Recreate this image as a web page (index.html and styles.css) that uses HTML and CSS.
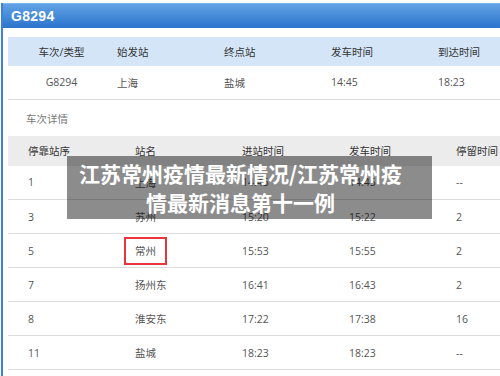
FILE: index.html
```html
<!DOCTYPE html>
<html>
<head>
<meta charset="utf-8">
<link rel="stylesheet" href="styles.css">
</head>
<body>
<div class="page">
  <div class="titlebar">G8294</div>
  <div class="content">
    <table class="tbl summary">
      <tr class="head"><th class="c1">车次/类型</th><th>始发站</th><th>终点站</th><th>发车时间</th><th>到达时间</th></tr>
      <tr><td class="c1">G8294</td><td>上海</td><td>盐城</td><td>14:45</td><td>18:23</td></tr>
    </table>
    <div class="section">车次详情</div>
    <table class="tbl stops">
      <tr class="head"><th>停靠站序</th><th>站名</th><th>进站时间</th><th>发车时间</th><th>停留时间</th></tr>
      <tr><td>1</td><td>上海</td><td>14:45</td><td>14:45</td><td>--</td></tr>
      <tr><td>3</td><td>苏州</td><td>15:20</td><td>15:22</td><td>2</td></tr>
      <tr><td>5</td><td><span class="mark">常州</span></td><td>15:53</td><td>15:55</td><td>2</td></tr>
      <tr><td>7</td><td>扬州东</td><td>16:41</td><td>16:43</td><td>2</td></tr>
      <tr><td>8</td><td>淮安东</td><td>17:22</td><td>17:38</td><td>16</td></tr>
      <tr><td>11</td><td>盐城</td><td>18:23</td><td>18:23</td><td>--</td></tr>
    </table>
  </div>
  <div class="overlay">江苏常州疫情最新情况/江苏常州疫<br>情最新消息第十一例</div>
</div>
</body>
</html>
```

FILE: styles.css
```css
html, body {
  margin: 0;
  padding: 0;
  background: #fff;
  overflow: hidden;
  width: 500px;
  height: 376px;
}
body {
  font-family: "Open Sans", "Noto Sans CJK SC", sans-serif;
  font-size: 10.5px;
  color: #555;
}
.page {
  position: relative;
  margin-top: 3px;
  margin-left: 1px;
  border-left: 2px solid #3d82d8;
  height: 373px;
  overflow: hidden;
}
.titlebar {
  height: 25px;
  line-height: 25px;
  padding-left: 8px;
  background: linear-gradient(#62a2e4, #2a74cd);
  border-top: 1px solid #7db3ea;
  box-sizing: border-box;
  color: #fff;
  font-family: "Liberation Sans", "Noto Sans CJK SC", sans-serif;
  font-weight: bold;
  font-size: 14px;
  letter-spacing: 0.3px;
}
.content {
  padding: 9px 0 0 5px;
}
.tbl {
  border-collapse: collapse;
  table-layout: fixed;
  width: 535px;
}
.tbl th, .tbl td {
  box-sizing: border-box;
  width: 107px;
  text-align: left;
  padding: 0 0 0 2px;
  white-space: nowrap;
  overflow: hidden;
  font-weight: normal;
}
.tbl th {
  color: #333;
}
.summary .head {
  background: #d3e5f7;
  height: 29px;
}
.summary td {
  height: 33px;
  border-bottom: 1px solid #dcdcdc;
}
.summary .c1 {
  text-align: center;
  padding: 0;
}
.section {
  height: 36px;
  line-height: 38px;
  padding-left: 18px;
  color: #777;
}
.stops th, .stops td {
  padding-left: 20px;
}
.stops .head {
  background: #ececec;
  height: 30px;
}
.stops td {
  height: 34px;
  border-bottom: 1px solid #dcdcdc;
  overflow: visible;
}
.mark {
  display: inline-block;
  margin-left: -11px;
  padding: 0 9px;
  line-height: 24px;
  border: 2px solid #e8353b;
}
.overlay {
  position: absolute;
  left: 64px;
  top: 153px;
  width: 365px;
  height: 63px;
  box-sizing: border-box;
  padding: 3px 28px 0 10px;
  background: rgba(0, 0, 0, 0.45);
  color: #fff;
  font-family: "Noto Sans CJK SC", sans-serif;
  font-weight: bold;
  font-size: 21px;
  line-height: 29px;
  text-align: center;
  white-space: nowrap;
}
```
